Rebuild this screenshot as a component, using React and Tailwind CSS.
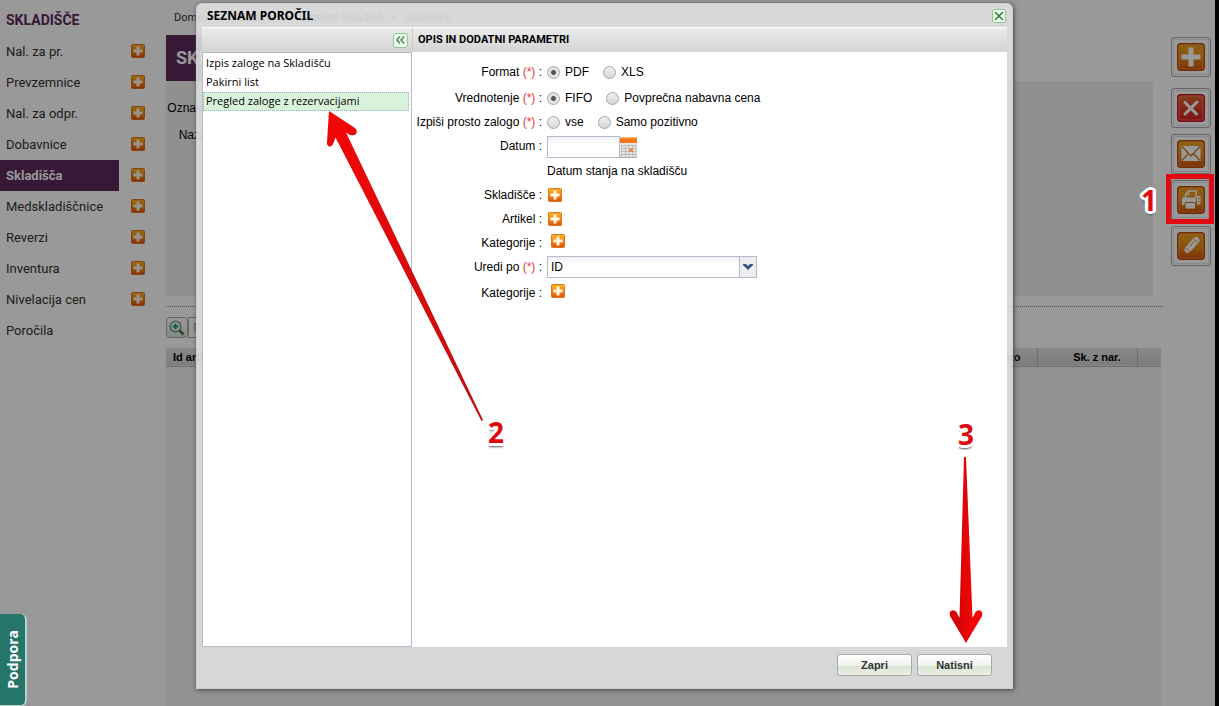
import { useState } from "react";
import clsx from "clsx";

const menuItems = [
  { name: "Nal. za pr.", add: true },
  { name: "Prevzemnice", add: true },
  { name: "Nal. za odpr.", add: true },
  { name: "Dobavnice", add: true },
  { name: "Skladišča", add: true },
  { name: "Medskladiščnice", add: true },
  { name: "Reverzi", add: true },
  { name: "Inventura", add: true },
  { name: "Nivelacija cen", add: true },
  { name: "Poročila", add: false },
];

const reports = [
  "Izpis zaloge na Skladišču",
  "Pakirni list",
  "Pregled zaloge z rezervacijami",
];

// small orange plus
function PlusIcon() {
  return (
    <svg width="14" height="14" viewBox="0 0 14 14">
      <defs>
        <linearGradient id="plusFill" x1="0" y1="0" x2="0" y2="1">
          <stop offset="0" stopColor="#ffb325" />
          <stop offset="0.5" stopColor="#f58a14" />
          <stop offset="1" stopColor="#e34d08" />
        </linearGradient>
      </defs>
      <rect x="0.5" y="0.5" width="13" height="13" rx="1" fill="url(#plusFill)" stroke="#d9761f" />
      <path d="M5.5 2.5h3v3h3v3h-3v3h-3v-3h-3v-3h3z" fill="#fff8e6" />
    </svg>
  );
}

function AddButton({ label }) {
  return (
    <button type="button" aria-label={label} className="block">
      <PlusIcon />
    </button>
  );
}

// big toolbar icons on the right side
function ToolIcon({ kind }) {
  const danger = kind === "delete";
  return (
    <svg width="28" height="28" viewBox="0 0 28 28">
      <defs>
        <linearGradient id="toolFill" x1="0" y1="0" x2="0" y2="1">
          <stop offset="0" stopColor="#f0a31a" />
          <stop offset="0.5" stopColor="#e58d17" />
          <stop offset="0.8" stopColor="#dc6a0c" />
          <stop offset="1" stopColor="#cf4208" />
        </linearGradient>
        <linearGradient id="dangerFill" x1="0" y1="0" x2="0" y2="1">
          <stop offset="0" stopColor="#e0662f" />
          <stop offset="1" stopColor="#d9182a" />
        </linearGradient>
      </defs>
      <rect
        x="0.75" y="0.75" width="26.5" height="26.5" rx="3" strokeWidth="1.5"
        fill={danger ? "url(#dangerFill)" : "url(#toolFill)"}
        stroke={danger ? "#c8102e" : "#bb4a0b"}
      />
      <rect x="2" y="2" width="24" height="24" rx="2" fill="none" stroke="#f0a860" strokeOpacity="0.6" />
      {kind === "add" && <path d="M11.5 4.5h5v7h7v5h-7v7h-5v-7h-7v-5h7z" fill="#fff" />}
      {kind === "delete" && <path d="M8 8.500 19.500 20M20 8 8 20" stroke="#fff" strokeWidth="3" strokeLinecap="round" />}
      {kind === "mail" && (
        <>
          <rect x="4.500" y="6" width="19" height="15" fill="#fff" />
          <path d="M5 6.500 14 16l9-9.500M5 20.500l6-6.500M23 20.500 17 14" fill="none" stroke="#c9741d" strokeWidth="1.300" />
        </>
      )}
      {kind === "print" && (
        <>
          <path d="M8.500 12V8.500l3-3.500H19v7" fill="none" stroke="#fff" strokeWidth="1.500" />
          <path d="M12 5v3.800H8.500" fill="none" stroke="#fff" />
          <path d="M5 11.500h14V19H5z" fill="#fff" />
          <path d="M20 10h3.500v8.500H20z" fill="#fff" />
          <path d="M8 16.500h10.500v6.500H8z" fill="#fff" stroke="#d06d12" />
          <path d="M21 12.500h1.500M21 15.500h1.500" stroke="#c96b16" strokeWidth="1.200" />
        </>
      )}
      {kind === "edit" && (
        <>
          <path d="m7 22 1-6L17 5.500q2-1.500 4 0t1.500 4L13 20z" fill="#fff" />
          <path d="m9 16 4 3.500M16.500 7l5 4M12.500 15l4.500-5.500" stroke="#d98a2b" strokeWidth="1" fill="none" />
          <path d="m7 22 .600-3 2.200 2.200z" fill="#b85a10" />
        </>
      )}
    </svg>
  );
}

function ToolButton({ kind, label }) {
  return (
    <button
      type="button"
      aria-label={label}
      className="flex size-10 items-center justify-center rounded-[3px] border border-[#a8a8a8] bg-white shadow-[inset_0_0_0_1px_#fff,inset_0_0_0_2px_#e2e2e2]"
    >
      <ToolIcon kind={kind} />
    </button>
  );
}

function Row({ label, required, htmlFor, children, className }) {
  return (
    <div className={clsx("flex h-6 items-center gap-[5px]", className)}>
      <label htmlFor={htmlFor} className="w-[130px] shrink-0 whitespace-nowrap text-right">
        {label} {required && <span className="text-[#e0393e]">(*) </span>}:
      </label>
      {children}
    </div>
  );
}

function Radio({ name, label, defaultChecked }) {
  return (
    <label className="mr-[9px] flex items-center gap-[5px]">
      <input
        type="radio"
        name={name}
        defaultChecked={defaultChecked}
        className="size-[13px] appearance-none rounded-full border border-[#a5a5a5] bg-linear-to-b from-[#efefef] to-[#d8d8d8] checked:bg-[radial-gradient(circle,#555_0_2px,#e4e4e4_3px)]"
      />
      {label}
    </label>
  );
}

function Digit({ children, className }) {
  return (
    <span
      className={clsx(
        "absolute font-['Open_Sans',sans-serif] text-[28px] leading-7 font-bold text-[#dc0a0e]",
        "[text-shadow:-2px_-2px_0_#fff,2px_-2px_0_#fff,-2px_2px_0_#fff,2px_2px_0_#fff,-3px_0_0_#fff,3px_0_0_#fff,0_-3px_0_#fff,0_3px_0_#fff,-3px_-1px_0_#fff,3px_1px_0_#fff,-3px_1px_0_#fff,3px_-1px_0_#fff,0_4px_2px_#555]",
        className
      )}
    >
      {children}
    </span>
  );
}

function Sidebar() {
  return (
    <nav className="w-[166px] shrink-0 font-[Roboto,sans-serif] text-[13px] text-[#333]">
      <h2 className="flex h-9 items-center px-[6px] pt-1 text-sm font-bold text-[#5a285d]">SKLADIŠČE</h2>
      <ul>
        {menuItems.map((item) => (
          <li key={item.name} className="flex h-[31px] items-center">
            <a
              href="#"
              className={clsx(
                "mr-3 flex w-[119px] items-center px-[6px]",
                item.name === "Skladišča" ? "h-[31px] bg-[#5a285d] font-bold text-white" : "h-[31px]"
              )}
            >
              {item.name}
            </a>
            {item.add && (
              <div className="pb-[2px]">
                <AddButton label={"Dodaj " + item.name} />
              </div>
            )}
          </li>
        ))}
      </ul>
    </nav>
  );
}

function Content() {
  return (
    <main className="flex min-w-0 flex-1 flex-col font-['Liberation_Sans',sans-serif] text-xs">
      <div className="flex h-[35px] items-center gap-2 px-2 pt-[2px] font-[Roboto,sans-serif] text-[11px] text-[#333]">
        <a href="#">Domov</a>
        <span>&gt;</span>
        <a href="#">Skladišče</a>
        <span>&gt;</span>
        <a href="#">Seznam Skladišč</a>
        <span>&gt;</span>
        <a href="#">Skladišče</a>
      </div>
      <h1 className="flex h-[46px] w-fit items-center bg-[#5a285d] px-[10px] font-[Roboto,sans-serif] text-lg font-bold text-white">
        SKLADIŠČE
      </h1>
      <div className="mr-[10px] h-[215px] bg-[#f0f0f0] pt-[13px]">
        <div className="h-[27px] w-[46px] text-right leading-7">Oznaka:</div>
        <div className="h-[27px] w-[46px] text-right leading-7">Naziv:</div>
      </div>
      <div className="mt-[10px] border-t border-dotted border-[#888]" />
      <div className="mt-[10px] mb-[10px] flex h-[21px]">
        <button
          type="button"
          aria-label="Iskanje"
          className="flex w-[22px] items-center justify-center rounded-sm border border-[#aaa] bg-linear-to-b from-white to-[#dde6d8]"
        >
          <svg width="16" height="16" viewBox="0 0 16 16" fill="none">
            <path d="m10 10 4.500 4.500" stroke="#55604a" strokeWidth="2.500" />
            <circle cx="6.500" cy="6.500" r="5.300" fill="#eefaf4" stroke="#67917f" strokeWidth="1.300" />
            <path d="M6.500 3.500v6M3.500 6.500h6" stroke="#2c9c68" strokeWidth="2" />
          </svg>
        </button>
        <input
          aria-label="Poišči"
          placeholder="Poišči"
          className="w-[160px] border border-[#aaa] bg-white px-1 placeholder:text-[#999]"
        />
      </div>
      <div className="mr-[2px] flex-1 bg-[#f4f4f4]">
        <table className="w-full table-fixed text-[11px]">
          <thead>
            <tr className="h-[18px] border-b border-[#b5b5b8] bg-linear-to-b from-[#e3e4e6] to-[#d0d2d6]">
              <th className="px-[7px] pt-px text-left">Id artikla</th>
              <th className="border-r border-[#b5b5b8] px-4 pt-px text-right">Mesto</th>
              <th className="w-[100px] border-r border-[#b5b5b8] pt-px pl-5">Sk. z nar.</th>
              <th className="w-6" />
            </tr>
          </thead>
        </table>
      </div>
    </main>
  );
}

function ReportDialog() {
  const [selected, setSelected] = useState(2);

  return (
    <section
      role="dialog"
      aria-labelledby="dialog-title"
      className="relative flex min-w-0 flex-1 flex-col rounded-t-md border border-[#ccc] bg-[#dfdfdf]/90 px-[5px] shadow-[1px_1px_5px_#444]"
    >
      <header className="flex h-[23px] shrink-0 items-center justify-between rounded-t-md pr-px pl-[5px]">
        <h2 id="dialog-title" className="font-['Noto_Sans',sans-serif] text-xs font-bold">
          SEZNAM POROČIL
        </h2>
        <button
          type="button"
          aria-label="Zapri okno"
          className="flex size-[14px] items-center justify-center rounded-[3px] border border-[#8cc58c] bg-[#f1fbf1]"
        >
          <svg width="10" height="10" viewBox="0 0 10 10">
            <path d="m1 1 8 8M9 1 1 9" stroke="#2d7a35" strokeWidth="1.500" />
          </svg>
        </button>
      </header>

      <div className="flex min-h-0 flex-1">
        {/* report list */}
        <div className="flex w-[210px] shrink-0 flex-col">
          <div className="flex h-[25px] items-center justify-end border-t border-white bg-linear-to-b from-[#ebebeb] to-[#d4d4d4] pr-1">
            <button
              type="button"
              aria-label="Skrij seznam"
              className="flex size-[15px] items-center justify-center rounded-[3px] border border-[#8cc58c] bg-[#f1fbf1]"
            >
              <svg width="9" height="8" viewBox="0 0 9 8" fill="none" stroke="#419048" strokeWidth="1.500">
                <path d="M4 .5.8 4 4 7.500M8.200.5 5 4l3.200 3.500" />
              </svg>
            </button>
          </div>
          <ul className="flex-1 border border-[#b5b8c8] bg-white pt-px pr-[2px] font-['Open_Sans',sans-serif] text-[11px]">
            {reports.map((report, index) => (
              <li key={report}>
                <button
                  type="button"
                  onClick={() => setSelected(index)}
                  className={clsx(
                    "flex h-[19px] w-full items-center border px-[2px] whitespace-nowrap",
                    selected === index
                      ? "border-dotted border-[#8fb2c8] bg-[#d9f3da]"
                      : "border-transparent"
                  )}
                >
                  {report}
                </button>
              </li>
            ))}
          </ul>
        </div>

        {/* report parameters */}
        <div className="flex min-w-0 flex-1 flex-col">
          <h3 className="flex h-[25px] shrink-0 items-center border-t border-l border-t-white border-l-[#ccc] bg-linear-to-b from-[#ebebeb] to-[#d4d4d4] px-[5px] font-[Roboto,sans-serif] text-[11px] font-bold">
            OPIS IN DODATNI PARAMETRI
          </h3>
          <form className="flex-1 bg-white pt-2 font-['Liberation_Sans',sans-serif] text-xs">
            <Row label="Format" required>
              <Radio name="format" label="PDF" defaultChecked />
              <Radio name="format" label="XLS" />
            </Row>
            <Row label="Vrednotenje" required className="mt-[2px]">
              <Radio name="value" label="FIFO" defaultChecked />
              <Radio name="value" label="Povprečna nabavna cena" />
            </Row>
            <Row label="Izpiši prosto zalogo" required>
              <Radio name="stock" label="vse" />
              <Radio name="stock" label="Samo pozitivno" />
            </Row>
            <Row label="Datum" htmlFor="date">
              <div className="flex pt-[2px]">
                <input
                  id="date"
                  className="h-[22px] w-[73px] border border-[#b5b8c8] bg-linear-to-b from-[#f0f1f3] to-white to-40% px-[3px]"
                />
                <button type="button" aria-label="Izberi datum">
                  <svg width="17" height="21" viewBox="0 0 17 21">
                    <path d="M0 0h17v20.500H0z" fill="#e6e6e6" />
                    <path d="M0 0h17v6H0z" fill="#f97516" />
                    <path d="M0 0h17v1.500H0z" fill="#fdb06c" />
                    <path d="M1.500 8v12M5.500 8v12M9 8v12M12.500 8v12M16 8v12M1 8.500h15M1 11.500h15M1 14.500h15M1 17.500h15" stroke="#bcbcbc" />
                    <path d="M9 11.500h4v3.500H9z" fill="#f58b4a" />
                    <path d="M0 20.500h17" stroke="#aaa" />
                  </svg>
                </button>
              </div>
            </Row>
            <p className="flex h-[25px] items-center pl-[135px]">Datum stanja na skladišču</p>
            <Row label="Skladišče">
              <div className="pl-px">
                <AddButton label="Dodaj skladišče" />
              </div>
            </Row>
            <Row label="Artikel">
              <div className="pl-px">
                <AddButton label="Dodaj artikel" />
              </div>
            </Row>
            <Row label="Kategorije">
              <div className="pb-1 pl-1">
                <AddButton label="Dodaj kategorijo" />
              </div>
            </Row>
            <Row label="Uredi po" required htmlFor="sort">
              <div className="relative">
                <select
                  id="sort"
                  className="block h-[22px] w-[210px] appearance-none border border-[#b5b8c8] bg-linear-to-b from-[#f0f1f3] to-white to-40% px-[3px]"
                >
                  <option>ID</option>
                  <option>Naziv</option>
                </select>
                <span className="pointer-events-none absolute inset-y-px right-px flex w-[17px] items-center justify-center border-l border-[#b5b8c8] bg-[#eee]">
                  <svg width="10" height="6" viewBox="0 0 10 6">
                    <path d="M0 0h3l2 2 2-2h3v1L5 6 0 1z" fill="#34517f" />
                  </svg>
                </span>
              </div>
            </Row>
            <Row label="Kategorije" className="mt-[2px]">
              <div className="pb-1 pl-1">
                <AddButton label="Dodaj kategorijo" />
              </div>
            </Row>
          </form>
        </div>
      </div>

      <footer className="flex h-[41px] shrink-0 items-start justify-end gap-[5px] pt-[7px] pr-[15px] font-['Liberation_Sans',sans-serif] text-[11px] font-bold text-[#333]">
        {["Zapri", "Natisni"].map((text) => (
          <button
            key={text}
            type="button"
            className="h-[22px] w-[75px] rounded-[3px] border border-[#aaa] bg-[linear-gradient(#fff,#eff2ec_55%,#dce5d5_56%,#e9efe5)]"
          >
            {text}
          </button>
        ))}
      </footer>

      {/* step 2 */}
      <svg className="pointer-events-none absolute top-[106px] left-[128px]" width="162" height="314" viewBox="325 110 162 314">
        <defs>
          <linearGradient id="arrowList" x1="0" y1="0" x2="1" y2="1">
            <stop offset="0" stopColor="#f40606" />
            <stop offset="1" stopColor="#c00d10" />
          </linearGradient>
        </defs>
        <path
          d="M329 111 355 128Q358 131 356 134 354 136 350 135L346 132.500 483 420 481.500 421 335.500 137.500 333.500 143Q332 147 329 146.500 326.500 146 327 142Z"
          fill="url(#arrowList)"
        />
      </svg>
      <Digit className="top-[414px] left-[291px]">2</Digit>

      {/* step 3 */}
      <svg className="pointer-events-none absolute right-[28px] bottom-[44px]" width="36" height="188" viewBox="948 456 36 188">
        <defs>
          <linearGradient id="arrowPrint">
            <stop offset="0.3" stopColor="#d40406" />
            <stop offset="0.7" stopColor="#f60506" />
          </linearGradient>
        </defs>
        <path
          d="M966 643 950 616Q949 612 951 611 954 609 956.500 612L959.500 618 964 457H966L972.500 618 975.500 612Q978 609 981 611 983 613 982 616Z"
          fill="url(#arrowPrint)"
        />
      </svg>
      <Digit className="right-[38px] bottom-[240px]">3</Digit>
    </section>
  );
}

export default function App() {
  return (
    <div className="relative flex min-h-screen border-r-4 border-black bg-white">
      <Sidebar />
      <Content />
      <aside className="flex w-[52px] shrink-0 flex-col gap-[6px] pt-[37px] pl-2">
        <ToolButton kind="add" label="Dodaj" />
        <div className="mt-[5px]">
          <ToolButton kind="delete" label="Briši" />
        </div>
        <ToolButton kind="mail" label="Pošlji" />
        <ToolButton kind="print" label="Natisni" />
        <ToolButton kind="edit" label="Uredi" />
      </aside>

      {/* dimmed backdrop with the dialog */}
      <div className="absolute inset-0 flex bg-black/40 pt-[3px] pr-[202px] pb-[17px] pl-[196px]">
        <ReportDialog />
      </div>

      <button
        type="button"
        className="absolute bottom-0 left-0 flex h-[92px] w-[27px] items-center justify-center rounded-r-md border-r-2 border-b border-[#b4d4ce] bg-[#26756a]"
      >
        <span className="rotate-180 font-['Open_Sans',sans-serif] text-sm font-bold text-white [writing-mode:vertical-rl]">
          Podpora
        </span>
      </button>

      {/* step 1 */}
      <div className="pointer-events-none absolute top-[174px] right-px h-[50px] w-12 border-5 border-[#e20a12]" />
      <Digit className="top-[186px] right-[58px]">1</Digit>
    </div>
  );
}
